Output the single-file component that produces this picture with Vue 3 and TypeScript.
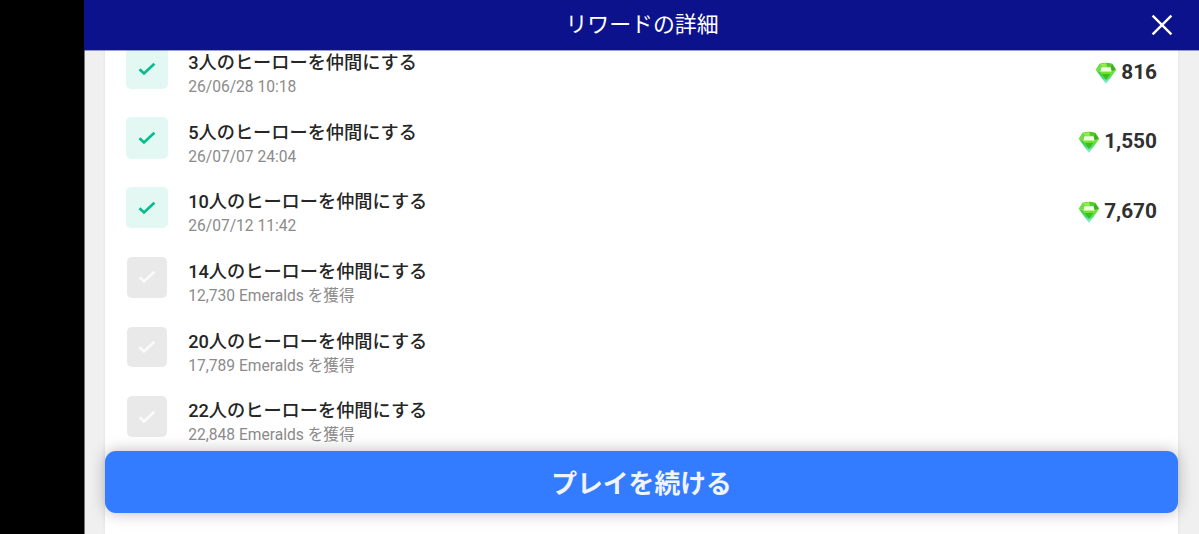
<script setup lang="ts">
interface Reward {
  title: string
  note: string
  done: boolean
  amount?: string
}

const rewards: Reward[] = [
  { title: '3人のヒーローを仲間にする', note: '26/06/28 10:18', done: true, amount: '816' },
  { title: '5人のヒーローを仲間にする', note: '26/07/07 24:04', done: true, amount: '1,550' },
  { title: '10人のヒーローを仲間にする', note: '26/07/12 11:42', done: true, amount: '7,670' },
  { title: '14人のヒーローを仲間にする', note: '12,730 Emeralds を獲得', done: false },
  { title: '20人のヒーローを仲間にする', note: '17,789 Emeralds を獲得', done: false },
  { title: '22人のヒーローを仲間にする', note: '22,848 Emeralds を獲得', done: false },
]
</script>

<template>
  <div class="screen">
    <main class="panel">
      <header class="bar">
        <h1>リワードの詳細</h1>
        <button class="close" aria-label="閉じる">
          <svg viewBox="0 0 22 22" width="22" height="22">
            <path d="M1.6 1.6 20.4 20.4M20.4 1.6 1.6 20.4" fill="none" stroke="#fff" stroke-width="2.4" />
          </svg>
        </button>
      </header>
      <div class="body">
        <section class="card">
          <ul>
            <li v-for="r in rewards" :key="r.title">
              <span class="tick" :class="{ done: r.done }">
                <svg viewBox="0 0 18 14" width="18" height="14">
                  <path d="M1.5 7.2 6 11.5 16.4 1.8" fill="none" stroke="currentColor" stroke-width="2.7" />
                </svg>
              </span>
              <div class="text">
                <div class="title">{{ r.title }}</div>
                <div class="note">{{ r.note }}</div>
              </div>
              <div v-if="r.amount" class="amount">
                <svg class="gem" viewBox="0 0 22 22" width="22" height="22">
                  <defs>
                    <linearGradient id="gem" x1="0" y1="0" x2="0" y2="1">
                      <stop offset="0" stop-color="#55c72a" />
                      <stop offset=".4" stop-color="#7fe63c" />
                      <stop offset=".7" stop-color="#4fdc7c" />
                      <stop offset="1" stop-color="#9df0f2" />
                    </linearGradient>
                  </defs>
                  <path d="M4.6 1.8Q11-.2 17.4 1.8L21.4 7.8 11 21.9.6 7.8Z" fill="url(#gem)" />
                  <path d="M1.4 7.6 4.8 2.6 6.4 5.4 5 9.2Z" fill="#6fdc58" />
                  <path d="M20.6 7.6 17.2 2.6 15.6 5.4 17 9.2Z" fill="#3fab2a" />
                  <path d="M4.8 2.2 11 1.1 12 4.8H7Z" fill="#8ff04c" />
                  <path d="M12 1.2 17.2 2.2 15 4.8H12Z" fill="#56c62e" />
                  <path d="M6.4 5.2H15.6L16.4 9.6H5.6Z" fill="#effee0" />
                  <path d="M5.6 10.6H16.4L11 18Z" fill="#39c01c" />
                  <path d="M5.6 10.4H16.4L15.6 11.8H6.6Z" fill="#8af02e" />
                  <path d="M1.8 8.8 5 10.2 9.2 17.2Z" fill="#2cc558" />
                  <path d="M20.2 8.8 17 10.2 12.6 17.4Z" fill="#63e23a" />
                </svg>
                <span>{{ r.amount }}</span>
              </div>
            </li>
          </ul>
        </section>
        <button class="continue">プレイを続ける</button>
      </div>
    </main>
  </div>
</template>

<style>
body {
  margin: 0;
  overflow: hidden;
}
</style>

<style scoped>
.screen {
  width: 1199px;
  height: 534px;
  padding-left: 84.5px;
  box-sizing: border-box;
  background: linear-gradient(to right, #000 84px, #777 84px, #777 85px, #000 85px);
  overflow: hidden;
  font-family: Roboto, "Noto Sans CJK JP", sans-serif;
}
.panel {
  height: 100%;
  display: flex;
  flex-direction: column;
  background: #f0f0f0;
}
.bar {
  position: relative;
  z-index: 1;
  flex: none;
  height: 50px;
  margin-left: -0.5px;
  padding-left: 1px;
  display: flex;
  align-items: center;
  justify-content: center;
  background: #0c128c;
  box-shadow: 0 1px 0 rgba(12, 18, 140, 0.4);
}
h1 {
  margin: 0;
  font-size: 21.9px;
  font-weight: 400;
  line-height: 50px;
  color: #fff;
}
button {
  border: 0;
  padding: 0;
  font-family: inherit;
}
.close {
  position: absolute;
  right: 26px;
  top: 14px;
  width: 22px;
  height: 22px;
  background: none;
}
svg {
  display: block;
}
.body {
  position: relative;
  flex: 1;
  min-height: 0;
  padding: 0 21px 0 20.5px;
  overflow: hidden;
}
.card {
  height: 100%;
  background: #fff;
  box-shadow: 0 0 3px rgba(0, 0, 0, 0.08);
  overflow: hidden;
}
ul {
  margin: -2.5px 0 0;
  padding: 0 21px;
  list-style: none;
}
li {
  display: flex;
  align-items: flex-start;
  height: 69.6px;
}
.tick {
  flex: none;
  width: 40.5px;
  height: 40.5px;
  margin: 0.8px 21.2px 0 0.5px;
  display: flex;
  align-items: center;
  justify-content: center;
  border-radius: 5px;
  background: #e9e9e9;
  color: #fafafa;
}
.tick.done {
  width: 41.5px;
  height: 41.5px;
  margin: 0.3px 20.7px 0 0;
  background: #e3f8f3;
  color: #08bd8d;
}
.text {
  flex: 1;
  padding-top: 1.7px;
}
.title {
  height: 27px;
  line-height: 27px;
  font-size: 18.2px;
  font-weight: 500;
  color: #262626;
}
.note {
  height: 22px;
  line-height: 22px;
  font-size: 15.6px;
  color: #8b8b8b;
}
.amount {
  display: flex;
  align-items: center;
  gap: 4px;
  height: 48.6px;
  font-size: 20.8px;
  font-weight: 700;
  color: #303030;
}
.gem {
  margin-top: 1.6px;
}
.continue {
  position: absolute;
  left: 20.5px;
  right: 21px;
  bottom: 21px;
  height: 62.5px;
  border-radius: 11px;
  background: #337bff;
  box-shadow: 0 0 16px rgba(0, 0, 0, 0.27);
  font-size: 25.8px;
  font-weight: 700;
  color: #f0f4ff;
}
</style>
